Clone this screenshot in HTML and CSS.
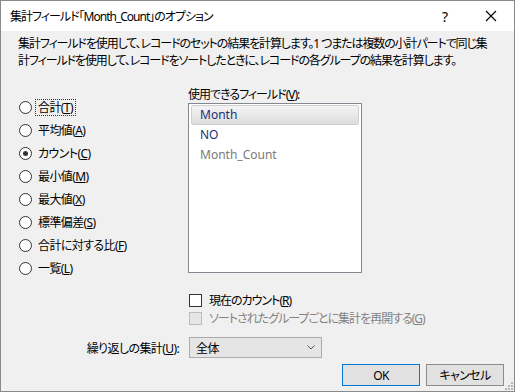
FILE: index.html
```html
<!DOCTYPE html>
<html lang="ja">

<head>
    <meta charset="UTF-8">
    <title>集計フィールドのオプション</title>
    <link rel="stylesheet" href="styles.css">
</head>

<body>
    <div class="dialog">
        <div class="titlebar">
            <span class="title">集計フィールド「Month_Count」のオプション</span>
            <span class="help">?</span>
            <svg class="close" width="12" height="12" viewBox="0 0 12 12">
                <path d="M1 1 L11 11 M11 1 L1 11" stroke="#000" stroke-width="1.1" fill="none" />
            </svg>
        </div>

        <div class="content">
            <p class="desc">集計フィールドを使用して、レコードのセットの結果を計算します。1 つまたは複数の小計パートで同じ集<br>計フィールドを使用して、レコードをソートしたときに、レコードの各グループの結果を計算します。</p>

            <div class="main">
                <ul class="radios">
                    <li><span class="radio"></span><span class="label focus">合計(<u>T</u>)</span></li>
                    <li><span class="radio"></span><span class="label">平均値(<u>A</u>)</span></li>
                    <li><span class="radio checked"></span><span class="label">カウント(<u>C</u>)</span></li>
                    <li><span class="radio"></span><span class="label">最小値(<u>M</u>)</span></li>
                    <li><span class="radio"></span><span class="label">最大値(<u>X</u>)</span></li>
                    <li><span class="radio"></span><span class="label">標準偏差(<u>S</u>)</span></li>
                    <li><span class="radio"></span><span class="label">合計に対する比(<u>F</u>)</span></li>
                    <li><span class="radio"></span><span class="label">一覧(<u>L</u>)</span></li>
                </ul>

                <div class="fields">
                    <div class="fields-label">使用できるフィールド(<u>V</u>):</div>
                    <ul class="listbox">
                        <li class="selected">Month</li>
                        <li>NO</li>
                        <li class="muted">Month_Count</li>
                    </ul>
                </div>
            </div>

            <div class="checks">
                <div class="check-row"><span class="checkbox"></span><span>現在のカウント(<u>R</u>)</span></div>
                <div class="check-row disabled"><span class="checkbox"></span><span>ソートされたグループごとに集計を再開する(<u>G</u>)</span></div>
            </div>

            <div class="repeat-row">
                <span class="repeat-label">繰り返しの集計(<u>U</u>):</span>
                <div class="combo">
                    <span>全体</span>
                    <svg width="8" height="5" viewBox="0 0 8 5">
                        <polyline points="0.5,0.5 4,4 7.5,0.5" stroke="#555" stroke-width="1" fill="none" />
                    </svg>
                </div>
            </div>

            <div class="buttons">
                <button class="default">OK</button>
                <button>キャンセル</button>
            </div>
        </div>

        <svg class="grip" width="10" height="10" viewBox="0 0 10 10">
            <g fill="#b5b5b5">
                <rect x="8" y="2" width="2" height="2" />
                <rect x="5" y="5" width="2" height="2" />
                <rect x="8" y="5" width="2" height="2" />
                <rect x="2" y="8" width="2" height="2" />
                <rect x="5" y="8" width="2" height="2" />
                <rect x="8" y="8" width="2" height="2" />
            </g>
        </svg>
    </div>
</body>

</html>
```

FILE: styles.css
```css
* {
    box-sizing: border-box;
    margin: 0;
    padding: 0;
}

body {
    font-family: "Noto Sans", "Noto Sans CJK JP", sans-serif;
    font-size: 12px;
    font-feature-settings: "palt";
    letter-spacing: -1px;
    color: #000;
    background: #fff;
}

u {
    text-decoration: underline;
    text-underline-offset: 1px;
}

.dialog {
    position: relative;
    width: 515px;
    height: 392px;
    border: 1px solid #8a8a8a;
    display: flex;
    flex-direction: column;
    background-color: #f0f0f0;
}

.titlebar {
    height: 30px;
    background-color: #fff;
    display: flex;
    align-items: center;
    padding-left: 9px;
}

.title {
    flex: 1;
    line-height: 17px;
}

.help {
    font-size: 14px;
    margin-right: 38px;
}

.close {
    margin-right: 17px;
}

.content {
    flex: 1;
    padding: 4px 10px 0 17px;
    display: flex;
    flex-direction: column;
}

.desc {
    line-height: 17px;
    white-space: nowrap;
    letter-spacing: -1.1px;
}

.main {
    display: flex;
    margin-top: 17px;
}

.radios {
    list-style: none;
    width: 170px;
    padding-top: 10px;
    letter-spacing: -0.6px;
}

.radios li {
    height: 23px;
    display: flex;
    align-items: center;
}

.radio {
    width: 13px;
    height: 13px;
    border: 1px solid #333;
    border-radius: 50%;
    background-color: #fff;
    margin-left: 1px;
    margin-right: 2px;
    display: flex;
    align-items: center;
    justify-content: center;
}

.radio.checked::after {
    content: "";
    width: 5px;
    height: 5px;
    border-radius: 50%;
    background-color: #333;
}

.label {
    padding: 0 2px;
    margin-left: 1px;
    line-height: 15px;
    border: 1px solid transparent;
}

.label.focus {
    border: 1px dotted #333;
}

.fields {
    width: 174px;
}

.fields-label {
    line-height: 17px;
}

.listbox {
    list-style: none;
    height: 170px;
    border: 1px solid #828790;
    background-color: #fff;
    padding: 1px 2px;
    letter-spacing: 0;
}

.listbox li {
    height: 20px;
    line-height: 20px;
    padding-left: 9px;
    color: #1e2f78;
}

.listbox li.selected {
    background: linear-gradient(#f4f4f4, #dddddd);
    border: 1px solid #cfcfcf;
    border-radius: 2px;
    line-height: 18px;
    padding-left: 8px;
}

.listbox li.muted {
    color: #7a7a7a;
}

.checks {
    margin-top: 11px;
    margin-left: 171px;
    letter-spacing: -1px;
}

.check-row {
    height: 18px;
    display: flex;
    align-items: center;
    gap: 7px;
}

.checkbox {
    width: 13px;
    height: 13px;
    border: 1px solid #333;
    background-color: #fff;
}

.check-row.disabled {
    color: #838383;
}

.check-row.disabled .checkbox {
    border-color: #bcbcbc;
    background-color: #e6e6e6;
}

.repeat-row {
    display: flex;
    align-items: center;
    margin-top: 10px;
    letter-spacing: -0.6px;
}

.repeat-label {
    width: 161px;
    margin-right: 10px;
    text-align: right;
}

.combo {
    width: 133px;
    height: 21px;
    border: 1px solid #acacac;
    background-color: #e5e5e5;
    display: flex;
    align-items: center;
    justify-content: space-between;
    padding: 0 6px 0 6px;
}

.buttons {
    display: flex;
    justify-content: flex-end;
    gap: 6px;
    margin-top: 6px;
}

.buttons button {
    width: 78px;
    height: 22px;
    font: inherit;
    font-feature-settings: "palt";
    letter-spacing: -0.6px;
    color: #000;
    background-color: #e1e1e1;
    border: 1px solid #8c8c8c;
}

.buttons button.default {
    border-color: #0078d7;
}

.grip {
    position: absolute;
    right: 1px;
    bottom: 1px;
}
```
